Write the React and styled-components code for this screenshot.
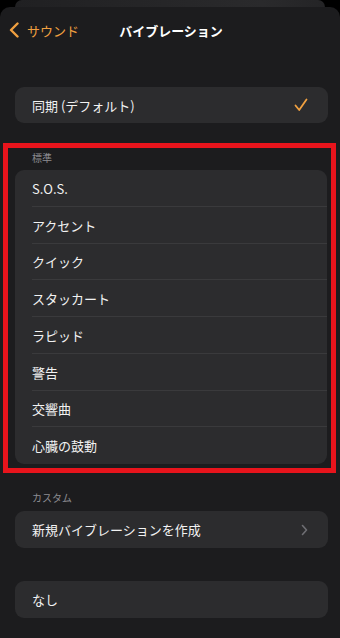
import React from "react";
import styled, { createGlobalStyle } from "styled-components";

const GlobalStyle = createGlobalStyle`
  html, body {
    margin: 0;
    padding: 0;
    background: #000;
  }
  body {
    font-family: "Noto Sans CJK JP", "Noto Sans", sans-serif;
    -webkit-font-smoothing: antialiased;
  }
`;

const orange = "#f0a040";

const Screen = styled.div`
  width: 340px;
  height: 638px;
  overflow: hidden;
  background: #000;
  display: flex;
  flex-direction: column;
`;

const BackSheet = styled.div`
  height: 7px;
  margin: 0 15px;
  border-radius: 12px 12px 0 0;
  background: linear-gradient(90deg, #202022, #2a2a2c 80%, #242426);
  flex-shrink: 0;
`;

const Sheet = styled.div`
  flex: 1;
  background: #1c1c1e;
  border-radius: 10px 10px 0 0;
  display: flex;
  flex-direction: column;
`;

const NavBar = styled.div`
  height: 46px;
  display: flex;
  align-items: center;
  position: relative;
  padding: 0 9px;
`;

const BackButton = styled.div`
  display: flex;
  align-items: center;
  gap: 7px;
  color: ${orange};
  font-size: 13px;
  letter-spacing: 0;
`;

const Title = styled.div`
  position: absolute;
  left: 0;
  right: 0;
  text-align: center;
  padding-left: 2px;
  color: #fff;
  font-size: 13px;
  font-weight: 700;
  pointer-events: none;
`;

const Content = styled.div`
  display: flex;
  flex-direction: column;
  padding: 0 12px 0 15px;
`;

const Card = styled.div`
  background: #2c2c2e;
  border-radius: 9px;
  overflow: hidden;
  margin-top: ${(p) => p.$top || 0}px;
`;

const Row = styled.div`
  height: ${(p) => p.$h || 36.75}px;
  display: flex;
  align-items: center;
  justify-content: space-between;
  padding: 0 20px 0 17px;
  color: #f2f2f2;
  font-size: 13px;
  position: relative;
  &:not(:last-child)::after {
    content: "";
    position: absolute;
    left: 17px;
    right: 0;
    bottom: 0;
    height: 1px;
    background: #3a3a3c;
  }
`;

const Highlight = styled.div`
  margin: 20px -8px 0 -12px;
  border: 5px solid #e8141c;
  padding: 0 4px 4px 7px;
`;

const SectionHeader = styled.div`
  color: #8d8d92;
  font-size: 10px;
  line-height: 14px;
  padding: ${(p) => p.$pad || "3px 0 5px 17px"};
`;

const Check = () => (
  <svg width="14" height="14" viewBox="0 0 14 14">
    <polyline
      points="1.5,7.5 5.2,12 12.5,1.5"
      fill="none"
      stroke={orange}
      strokeWidth="1.8"
      strokeLinecap="round"
      strokeLinejoin="round"
    />
  </svg>
);

const BackChevron = () => (
  <svg width="11" height="16" viewBox="0 0 11 16">
    <polyline
      points="8.5,1.5 2,8 8.5,14.5"
      fill="none"
      stroke={orange}
      strokeWidth="2.4"
      strokeLinecap="round"
      strokeLinejoin="round"
    />
  </svg>
);

const Chevron = () => (
  <svg width="7" height="12" viewBox="0 0 7 12">
    <polyline
      points="1.5,1.5 5.5,6 1.5,10.5"
      fill="none"
      stroke="#6e6e73"
      strokeWidth="1.6"
      strokeLinecap="round"
      strokeLinejoin="round"
    />
  </svg>
);

const standard = [
  "S.O.S.",
  "アクセント",
  "クイック",
  "スタッカート",
  "ラピッド",
  "警告",
  "交響曲",
  "心臓の鼓動",
];

export default function App() {
  return (
    <>
      <GlobalStyle />
      <Screen>
        <BackSheet />
        <Sheet>
          <NavBar>
            <BackButton>
              <BackChevron />
              サウンド
            </BackButton>
            <Title>バイブレーション</Title>
          </NavBar>
          <Content>
            <Card $top={34}>
              <Row $h={36}>
                同期 (デフォルト)
                <Check />
              </Row>
            </Card>

            <Highlight>
              <SectionHeader>標準</SectionHeader>
              <Card>
                {standard.map((s) => (
                  <Row key={s}>{s}</Row>
                ))}
              </Card>
            </Highlight>

            <SectionHeader $pad="18px 0 6px 17px">カスタム</SectionHeader>
            <Card>
              <Row $h={37}>
                新規バイブレーションを作成
                <Chevron />
              </Row>
            </Card>

            <Card $top={33}>
              <Row $h={37}>なし</Row>
            </Card>
          </Content>
        </Sheet>
      </Screen>
    </>
  );
}
